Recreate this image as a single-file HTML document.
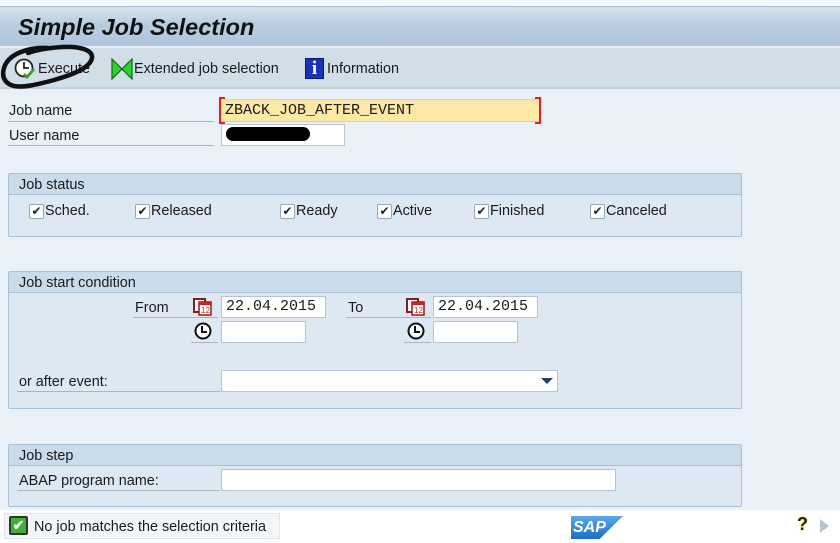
<!DOCTYPE html>
<html><head><meta charset="utf-8"><style>
*{margin:0;padding:0;box-sizing:border-box}
body{width:840px;height:543px;overflow:hidden;background:#eaf0f7;font-family:"Liberation Sans",Tahoma,sans-serif;font-size:14.4px;color:#1a1a1a;position:relative}
.a{position:absolute}
.title{left:0;top:6px;width:840px;height:40px;background:linear-gradient(#d6e3ef,#b9cde1 45%,#afc5dc);border-top:1px solid #a9b8cc}
.title span{position:absolute;left:18px;top:7px;font-size:23.5px;font-weight:bold;font-style:italic;color:#111}
.tb{left:0;top:47px;width:840px;height:42px;background:#d1dee8;border-top:1px solid #e3ebf2;border-bottom:2px solid #c3d1df}
.lbl{font-size:14.4px}
.line{border-bottom:1px solid #aab5c2}
.in{background:#fff;border:1px solid #b9c3ce;font-family:"Liberation Mono",monospace;font-size:15px;padding-left:4px;line-height:20px}
.grp{left:8px;width:734px;background:#dde8f3;border:1px solid #a9c1d9;border-radius:2px}
.gh{height:21px;background:#c9dcec;border-bottom:1px solid #a9c1d9;padding-left:10px;line-height:22px;font-size:14.4px}
.cb{width:15px;height:15px;background:#fff;border:1px solid #9aa7b5;border-radius:2px;font-size:12px;line-height:13px;text-align:center;color:#222}
.ck{display:flex;align-items:center;gap:1px}
.status{left:0;top:510px;width:840px;height:33px;background:#fff}
</style></head><body>
<div class="a" style="left:0;top:0;width:840px;height:6px;background:#f4f6f9"></div>
<div class="a title"><span>Simple Job Selection</span></div>
<div class="a tb">
 <svg class="a" style="left:13px;top:9px" width="26" height="24" viewBox="0 0 26 24"><circle cx="11" cy="11" r="8.5" fill="#fff" stroke="#222" stroke-width="1.8"/><path d="M11 5v6h5" stroke="#222" stroke-width="1.8" fill="none"/><path d="M11 17l3 3 7-8" stroke="#3a9a2a" stroke-width="2.8" fill="none"/></svg>
 <span class="a" style="left:38px;top:13px">Execute</span>
 <svg class="a" style="left:111px;top:10px" width="22" height="22" viewBox="0 0 22 22"><path d="M1 1L11 11 1 21Z M21 1L11 11 21 21Z" fill="#2fd12f" stroke="#116611" stroke-width="1.2"/></svg>
 <span class="a" style="left:134px;top:13px">Extended job selection</span>
 <div class="a" style="left:305px;top:10px;width:19px;height:21px;background:#1833b8;border:1px solid #0a1a66;color:#fff;font-weight:bold;font-family:'Liberation Serif',serif;font-size:19px;text-align:center;line-height:20px">i</div>
 <span class="a" style="left:327px;top:13px">Information</span>
</div>
<svg class="a" style="left:0;top:42px" width="100" height="52" viewBox="0 0 100 52"><path d="M48 6C28 5 8 12 4 26c-3 10 2 16 10 18 10 2 25-2 40-6 18-5 36-12 38-22 1-8-12-12-30-11-14 1-26 3-34 6" fill="none" stroke="#111" stroke-width="4.5" stroke-linecap="round"/></svg>

<div class="a line" style="left:8px;top:99px;width:206px;height:23px"><span class="lbl" style="position:absolute;left:1px;top:4px">Job name</span></div>
<div class="a line" style="left:8px;top:124px;width:206px;height:22px"><span class="lbl" style="position:absolute;left:1px;top:4px">User name</span></div>
<div class="a in" style="left:220px;top:99px;width:320px;height:23px;background:#fbe9a5;border:1px solid #e4d08a;line-height:21px">ZBACK_JOB_AFTER_EVENT</div>
<div class="a" style="left:219px;top:97px;width:6px;height:27px;border:2px solid #d22;border-right:none"></div>
<div class="a" style="left:535px;top:97px;width:6px;height:27px;border:2px solid #d22;border-left:none"></div>
<div class="a in" style="left:221px;top:124px;width:124px;height:22px"></div>
<div class="a" style="left:226px;top:127px;width:84px;height:14px;background:#000;border-radius:7px"></div>

<div class="a grp" style="top:173px;height:64px"><div class="gh">Job status</div>
 <div class="a ck" style="left:20px;top:29px"><div class="cb">✔</div>Sched.</div>
 <div class="a ck" style="left:126px;top:29px"><div class="cb">✔</div>Released</div>
 <div class="a ck" style="left:271px;top:29px"><div class="cb">✔</div>Ready</div>
 <div class="a ck" style="left:368px;top:29px"><div class="cb">✔</div>Active</div>
 <div class="a ck" style="left:465px;top:29px"><div class="cb">✔</div>Finished</div>
 <div class="a ck" style="left:581px;top:29px"><div class="cb">✔</div>Canceled</div>
</div>

<div class="a grp" style="top:271px;height:138px"><div class="gh">Job start condition</div></div>
<div class="a line" style="left:133px;top:296px;width:85px;height:22px"><span class="lbl" style="position:absolute;left:2px;top:4px">From</span></div>
<div class="a in" style="left:221px;top:296px;width:105px;height:22px">22.04.2015</div>
<div class="a line" style="left:346px;top:296px;width:85px;height:22px"><span class="lbl" style="position:absolute;left:2px;top:4px">To</span></div>
<div class="a in" style="left:433px;top:296px;width:105px;height:22px">22.04.2015</div>
<div class="a line" style="left:191px;top:320px;width:27px;height:23px"></div>
<div class="a line" style="left:404px;top:320px;width:27px;height:23px"></div>
<div class="a in" style="left:221px;top:321px;width:85px;height:22px"></div>
<div class="a in" style="left:433px;top:321px;width:85px;height:22px"></div>
<svg class="a" style="left:193px;top:298px" width="20" height="18"><rect x="1" y="1" width="11" height="13" fill="#fff" stroke="#8b1a1a" stroke-width="2"/><rect x="6" y="4" width="12" height="13" fill="#fff" stroke="#8b1a1a" stroke-width="1.5"/><rect x="6" y="4" width="12" height="3" fill="#c22"/><text x="8" y="15" font-size="8" fill="#c22" font-family="Liberation Sans">12</text></svg>
<svg class="a" style="left:406px;top:298px" width="20" height="18"><rect x="1" y="1" width="11" height="13" fill="#fff" stroke="#8b1a1a" stroke-width="2"/><rect x="6" y="4" width="12" height="13" fill="#fff" stroke="#8b1a1a" stroke-width="1.5"/><rect x="6" y="4" width="12" height="3" fill="#c22"/><text x="8" y="15" font-size="8" fill="#c22" font-family="Liberation Sans">12</text></svg>
<svg class="a" style="left:194px;top:322px" width="18" height="18"><circle cx="9" cy="9" r="7.5" fill="#fff" stroke="#111" stroke-width="2"/><path d="M8 4v6h5" stroke="#111" stroke-width="2" fill="none"/></svg>
<svg class="a" style="left:407px;top:322px" width="18" height="18"><circle cx="9" cy="9" r="7.5" fill="#fff" stroke="#111" stroke-width="2"/><path d="M8 4v6h5" stroke="#111" stroke-width="2" fill="none"/></svg>
<div class="a line" style="left:17px;top:370px;width:203px;height:22px"><span class="lbl" style="position:absolute;left:2px;top:4px">or after event:</span></div>
<div class="a in" style="left:221px;top:370px;width:337px;height:22px"></div>
<div class="a" style="left:541px;top:378px;width:0;height:0;border-left:6px solid transparent;border-right:6px solid transparent;border-top:6px solid #1f3f6a"></div>

<div class="a grp" style="top:444px;height:63px"><div class="gh">Job step</div></div>
<div class="a line" style="left:17px;top:469px;width:203px;height:22px"><span class="lbl" style="position:absolute;left:2px;top:4px">ABAP program name:</span></div>
<div class="a in" style="left:221px;top:469px;width:395px;height:22px"></div>

<div class="a status"></div>
<div class="a" style="left:4px;top:513px;width:276px;height:26px;background:#f3f6f9;border:1px solid #dfe6ee"></div>
<div class="a" style="left:9px;top:516px;width:19px;height:19px;background:#3fb234;border:2px solid #333;border-radius:2px;color:#fff;font-size:14px;line-height:15px;text-align:center;font-weight:bold">✔</div>
<span class="a" style="left:34px;top:519px">No job matches the selection criteria</span>
<div class="a" style="left:571px;top:516px;width:52px;height:23px;background:linear-gradient(#5aa8e8,#1a6fc4);clip-path:polygon(0 0,100% 0,55% 100%,0 100%);color:#fff;font-weight:bold;font-size:16px;padding-left:2px;line-height:23px;font-style:italic">SAP</div>
<span class="a" style="left:797px;top:514px;font-weight:bold;font-size:18px;color:#222;text-shadow:0 0 2px #f5d000">?</span>
<div class="a" style="left:820px;top:519px;width:0;height:0;border-top:7px solid transparent;border-bottom:7px solid transparent;border-left:9px solid #b8c4d2"></div>
</body></html>
